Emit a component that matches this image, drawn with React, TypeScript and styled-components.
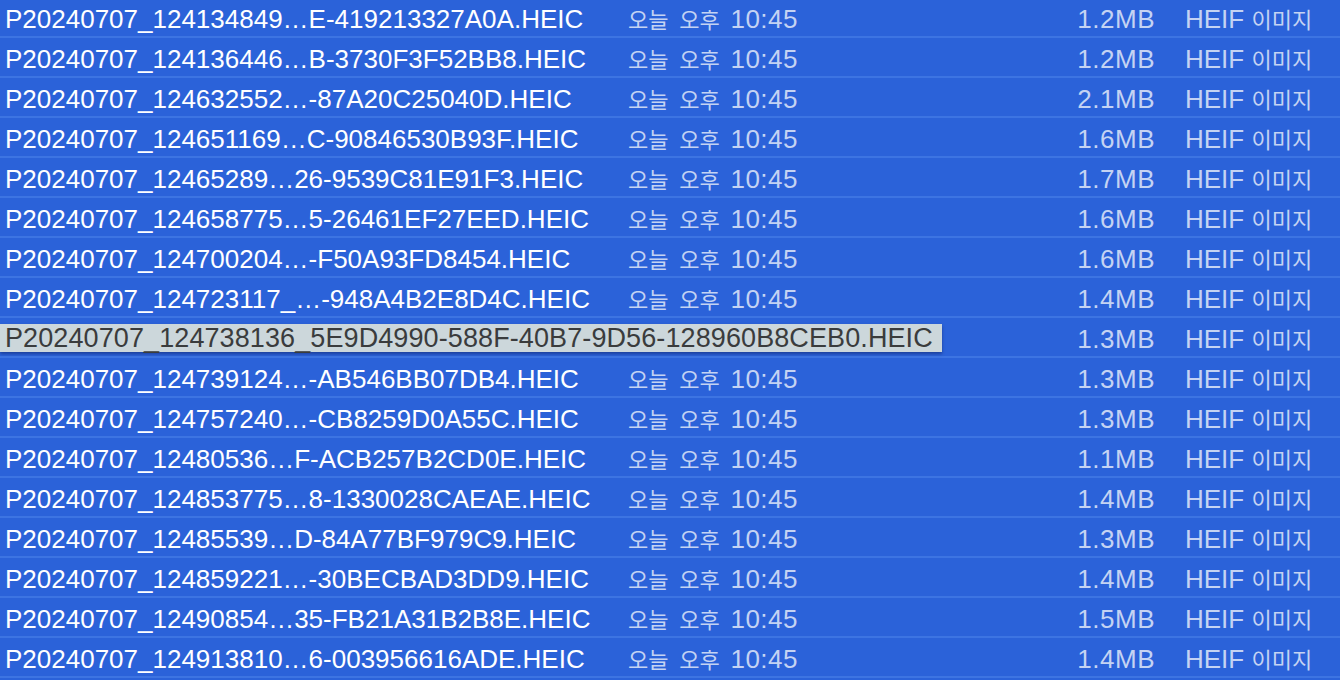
import React from "react";
import styled, { createGlobalStyle } from "styled-components";

const Global = createGlobalStyle`
  html, body { margin: 0; padding: 0; background: #2b62d9; overflow: hidden; }
  body { font-family: "Liberation Sans", Arial, "Noto Sans CJK KR", sans-serif; }
`;

const List = styled.div`
  width: 1340px;
  height: 680px;
  overflow: hidden;
  background: #2b62d9;
`;

const Scroller = styled.div`
  margin-top: -2px;
`;

const Row = styled.div`
  position: relative;
  display: grid;
  grid-template-columns: 623px 400px 127px 1fr;
  align-items: center;
  box-sizing: border-box;
  height: 40px;
  padding: 2px 0 0 5px;
  border-bottom: 2px solid #3d74e2;
  font-size: 26px;
  line-height: 36px;
  white-space: nowrap;
`;

const Name = styled.div<{ $covered?: boolean }>`
  color: #ffffff;
  overflow: hidden;
  text-overflow: ellipsis;
  visibility: ${(p) => (p.$covered ? "hidden" : "visible")};
`;

const DateCell = styled.div<{ $covered?: boolean }>`
  color: #c4d3f3;
  letter-spacing: 0.5px;
  word-spacing: 3px;
  visibility: ${(p) => (p.$covered ? "hidden" : "visible")};
`;

const Size = styled.div`
  color: #c4d3f3;
  letter-spacing: 0.5px;
  text-align: right;
`;

const Kind = styled.div`
  color: #c4d3f3;
  padding-left: 30px;
`;

const Ko = styled.span`
  font-family: "Noto Sans CJK KR", sans-serif;
  font-size: 22px;
  letter-spacing: 0;
`;

const Tip = styled.div`
  position: absolute;
  left: 0;
  top: 6px;
  height: 28px;
  box-sizing: border-box;
  padding: 0 9px 0 5px;
  background: #ccd7db;
  color: #3a3c3d;
  font-size: 27px;
  letter-spacing: 0.1px;
  line-height: 30px;
  white-space: nowrap;
  box-shadow: 0 2px 3px rgba(0, 0, 40, 0.35);
  display: flex;
  align-items: center;
`;

type File = { name: string; size: string; full?: string };

const files: File[] = [
  { name: "P20240707_124134849…E-419213327A0A.HEIC", size: "1.2MB" },
  { name: "P20240707_124136446…B-3730F3F52BB8.HEIC", size: "1.2MB" },
  { name: "P20240707_124632552…-87A20C25040D.HEIC", size: "2.1MB" },
  { name: "P20240707_124651169…C-90846530B93F.HEIC", size: "1.6MB" },
  { name: "P20240707_12465289…26-9539C81E91F3.HEIC", size: "1.7MB" },
  { name: "P20240707_124658775…5-26461EF27EED.HEIC", size: "1.6MB" },
  { name: "P20240707_124700204…-F50A93FD8454.HEIC", size: "1.6MB" },
  { name: "P20240707_124723117_…-948A4B2E8D4C.HEIC", size: "1.4MB" },
  {
    name: "P20240707_124738136…-128960B8CEB0.HEIC",
    size: "1.3MB",
    full: "P20240707_124738136_5E9D4990-588F-40B7-9D56-128960B8CEB0.HEIC",
  },
  { name: "P20240707_124739124…-AB546BB07DB4.HEIC", size: "1.3MB" },
  { name: "P20240707_124757240…-CB8259D0A55C.HEIC", size: "1.3MB" },
  { name: "P20240707_12480536…F-ACB257B2CD0E.HEIC", size: "1.1MB" },
  { name: "P20240707_124853775…8-1330028CAEAE.HEIC", size: "1.4MB" },
  { name: "P20240707_12485539…D-84A77BF979C9.HEIC", size: "1.3MB" },
  { name: "P20240707_124859221…-30BECBAD3DD9.HEIC", size: "1.4MB" },
  { name: "P20240707_12490854…35-FB21A31B2B8E.HEIC", size: "1.5MB" },
  { name: "P20240707_124913810…6-003956616ADE.HEIC", size: "1.4MB" },
];

export default function App() {
  return (
    <>
      <Global />
      <List>
        <Scroller>
          {files.map((f) => (
            <Row key={f.name}>
              <Name $covered={!!f.full}>{f.name}</Name>
              <DateCell $covered={!!f.full}>
                <Ko>오늘</Ko> <Ko>오후</Ko> 10:45
              </DateCell>
              <Size>{f.size}</Size>
              <Kind>
                HEIF <Ko>이미지</Ko>
              </Kind>
              {f.full && <Tip>{f.full}</Tip>}
            </Row>
          ))}
        </Scroller>
      </List>
    </>
  );
}
